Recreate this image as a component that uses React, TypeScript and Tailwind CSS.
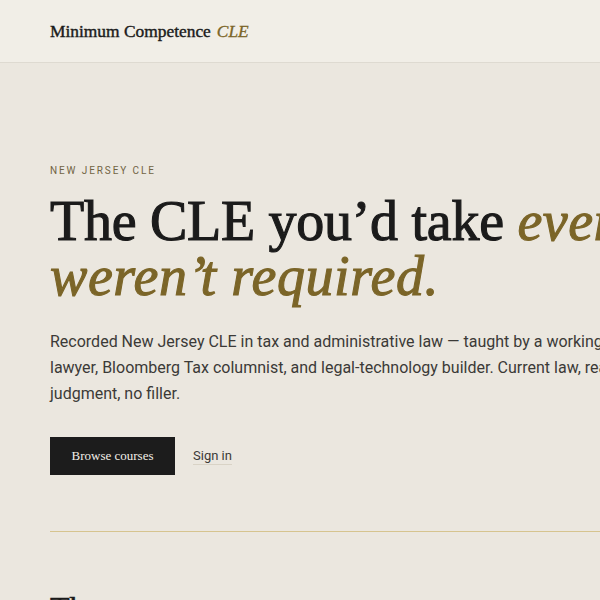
// Landing hero for a New Jersey CLE site.
const serif = "font-['Liberation_Serif','DejaVu_Serif',serif]"
const sans = "font-['Roboto','Inter','Liberation_Sans',sans-serif]"

function SiteHeader() {
  return (
    <header className="h-[63px] border-b border-[#dedad1] bg-[#f1eee7]">
      <div className="flex h-full items-center px-[50px]">
        <a
          href="#"
          className={`${serif} flex items-baseline gap-[6px] text-[17.4px] text-[#1b1b1b] [-webkit-text-stroke:0.4px_#1b1b1b]`}
        >
          <span>Minimum Competence</span>
          <em className="text-[#7b6528] [-webkit-text-stroke:0.3px_#7b6528]">CLE</em>
        </a>
      </div>
    </header>
  )
}

export default function App() {
  return (
    <div className="min-h-[600px] w-full overflow-hidden bg-[#ebe7df]">
      <SiteHeader />

      {/* Hero */}
      <main className="w-[1000px] px-[50px]">
        <section className="pt-[100px] pb-[56px]">
          <p className={`${sans} text-[10px] tracking-[0.19em] uppercase text-[#716443]`}>
            New Jersey CLE
          </p>
          <h1
            className={`${serif} mt-[16px] w-[880px] text-[56px] leading-[55px] tracking-[-0.005em] text-[#1b1b1b] [-webkit-text-stroke:1.1px_#1b1b1b]`}
          >
            The CLE you’d take{' '}
            <em className="text-[#7b6528] tracking-[0.01em] [-webkit-text-stroke:1.1px_#7b6528]">
              even if they weren’t required.
            </em>
          </h1>
          <p className={`${sans} mt-[25px] w-[600px] text-[16px] leading-[26px] text-[#3b3a37]`}>
            Recorded New Jersey CLE in tax and administrative law — taught by a
            working lawyer, Bloomberg Tax columnist, and legal-technology
            builder. Current law, real judgment, no filler.
          </p>
          <div className="mt-[30px] flex items-center gap-[18px]">
            <a
              href="#"
              className={`${serif} inline-flex h-[38px] w-[125px] items-center justify-center bg-[#1c1c1c] text-[13px] text-[#f1eee7]`}
            >
              Browse courses
            </a>
            <a
              href="#"
              className={`${sans} border-b border-[#d9d3c6] text-[13px] leading-[16px] text-[#3b3a37]`}
            >
              Sign in
            </a>
          </div>
        </section>

        <div className="h-px bg-[#d6c48f]" />

        <section className="pt-[56px]">
          <h2 className={`${serif} text-[32px] leading-[40px] text-[#1b1b1b] [-webkit-text-stroke:0.6px_#1b1b1b]`}>
            Th<span className="opacity-10">e courses</span>
          </h2>
        </section>
      </main>
    </div>
  )
}
